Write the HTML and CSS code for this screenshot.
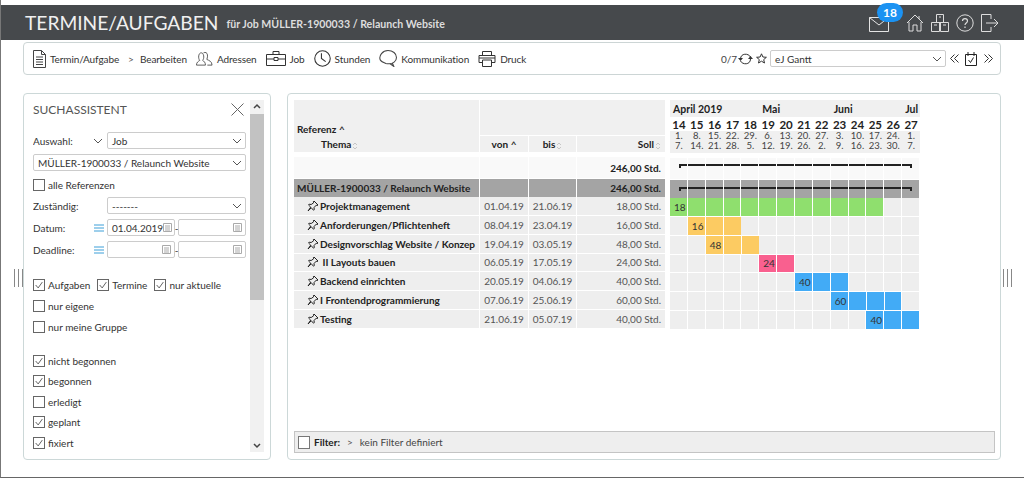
FILE: index.html
```html
<!DOCTYPE html>
<html lang="en">
<head>
    <meta charset="UTF-8">
    <title>Termine/Aufgaben</title>
    <link rel="stylesheet" href="styles.css">
</head>
<body>
<svg class="defs" width="0" height="0">
    <symbol id="pin" viewBox="0 0 12 12"><path d="M7 1l4 4-1 .6-.8-.4L7 7.600l.3 2-.8.6-2.200-2.400L1 11l2.700-3.900L1.500 5l.7-.8 2 .3L6.600 2.800l-.3-.9z" fill="none" stroke="#222" stroke-width="1"/></symbol>
    <symbol id="chev" viewBox="0 0 10 6"><path d="M1 1l4 4 4-4" fill="none" stroke="#555" stroke-width="1"/></symbol>
    <symbol id="check" viewBox="0 0 12 12"><path d="M2 6l3 3.500 5-7" fill="none" stroke="#444" stroke-width="1"/></symbol>
    <symbol id="cal" viewBox="0 0 9 9"><path d="M.5.500h8v8h-8zM2 3h5M2 5h5M2 7h5" fill="none" stroke="#aaa" stroke-width="1"/></symbol>
    <symbol id="lines" viewBox="0 0 10 8"><path d="M0 1h10M0 4h10M0 7h10" stroke="#3d9fd8" stroke-width="1"/></symbol>
    <symbol id="sort" viewBox="0 0 6 8"><path d="M1 3l2-2 2 2M1 5l2 2 2-2" fill="none" stroke="#bbb" stroke-width=".8"/></symbol>
</svg>

<div class="app">
    <header class="topbar">
        <h1>TERMINE/AUFGABEN</h1>
        <span class="subtitle">für Job MÜLLER-1900033 / Relaunch Website</span>
        <div class="top-icons">
            <div class="mail">
                <svg width="20" height="15" viewBox="0 0 20 15"><path d="M.5.500h19v14H.5zM.5.500L10 8l9.500-7.500" fill="none" stroke="#e4e4e4" stroke-width="1"/></svg>
                <span class="badge">18</span>
            </div>
            <svg width="18" height="18" viewBox="0 0 18 18"><path d="M1 9l8-8 8 8M3 8v9h4v-6h4v6h4V8M13 2v3" fill="none" stroke="#ddd" stroke-width="1"/></svg>
            <svg width="18" height="18" viewBox="0 0 18 18"><path d="M5.500.500h7v8h-7zM.5 8.500h8v9h-8zM9.500 8.500h8v9h-8zM3 11h3M12 11h3M8 3h2" fill="none" stroke="#ddd" stroke-width="1"/></svg>
            <svg width="18" height="18" viewBox="0 0 18 18"><circle cx="9" cy="9" r="8.200" fill="none" stroke="#ddd"/><path d="M6.500 7c0-3.200 5-3.200 5 0 0 2-2.500 2-2.500 4M9 12.500v1.500" fill="none" stroke="#ddd" stroke-width="1.200"/></svg>
            <svg width="18" height="18" viewBox="0 0 18 18"><path d="M10 5V.500H.5v17H10V13M5 9h12M13 5l4 4-4 4" fill="none" stroke="#ddd" stroke-width="1"/></svg>
        </div>
    </header>

    <nav class="toolbar">
        <a class="tool"><svg width="13" height="18" viewBox="0 0 13 18"><path d="M.5.500h8l4 4v13H.5zM8.500.500v4h4M3 7h7M3 9.500h7M3 12h7M3 14.500h7" fill="none" stroke="#444"/></svg>Termin/Aufgabe</a>
        <span class="crumb">&gt;</span>
        <a class="tool">Bearbeiten</a>
        <a class="tool"><svg width="17" height="15" viewBox="0 0 18 15"><path d="M.5 14.500c0-3 2-4 3.500-5-2-2-1.500-8 1.500-8s3.500 6 1.500 8c1.500 1 3 2 3 5zM8 1.500c3-1.500 5.500 1 3.500 7 2 1 5.500 2 5.500 6h-5" fill="none" stroke="#444" stroke-width=".9"/></svg>Adressen</a>
        <a class="tool"><svg width="20" height="15" viewBox="0 0 20 15"><path d="M.5 3.500h19v11H.5zM7 3.500V.5h6v3M.5 8H8M12 8h7.500M8 6.500h4v3H8z" fill="none" stroke="#333"/></svg>Job</a>
        <a class="tool"><svg width="17" height="17" viewBox="0 0 16 16"><circle cx="8" cy="8" r="7.300" fill="none" stroke="#333"/><path d="M7 3v5l4 3" fill="none" stroke="#333"/></svg>Stunden</a>
        <a class="tool"><svg width="18" height="17" viewBox="0 0 17 16"><path d="M8.500.500c4.500 0 8 2.700 8 6.500s-3.500 6-7 6c-1.500 0-2 0-3-.3C4.500 12 2 11 1.200 9.500-.5 5 3.500.500 8.500.500zM12.500 12l1.500 3.500-3.500-2.500" fill="none" stroke="#444"/></svg>Kommunikation</a>
        <a class="tool"><svg width="18" height="16" viewBox="0 0 17 16"><path d="M4 4V.5h9V4M.5 4.500h16v7H13M4 11.500H.5v-7M4 9h9v6.500H4zM.5 7h16" fill="none" stroke="#333"/></svg>Druck</a>
        <div class="tool-right">
            <span class="count">0/7</span>
            <svg width="15" height="12" viewBox="0 0 15 12"><path d="M2.500 6c0-6 8-6 10-2M12.500 6c0 6-8 6-10 2" fill="none" stroke="#333"/><path d="M0 5h5L2.500 8zM10 6h5l-2.500-3z" fill="#333"/></svg>
            <svg width="11" height="11" viewBox="0 0 11 11"><path d="M5.500.800l1.400 3.200 3.500.3-2.700 2.300.8 3.400-3-1.800-3 1.800.8-3.400L.6 4.300 4.100 4z" fill="none" stroke="#333"/></svg>
            <div class="select gantt-select"><span>eJ Gantt</span><svg class="chev"><use href="#chev"/></svg></div>
            <svg class="prev" width="9" height="9" viewBox="0 0 9 9"><path d="M4.500.5l-4 4 4 4M8.500.5l-4 4 4 4" fill="none" stroke="#333"/></svg>
            <svg class="today" width="12" height="14" viewBox="0 0 12 14"><path d="M.5 2.500h11v11H.5zM3 0v4M9 0v4M3.500 8l2 2.500 3-5" fill="none" stroke="#222"/></svg>
            <svg class="next" width="9" height="9" viewBox="0 0 9 9"><path d="M.5.500l4 4-4 4M4.500.500l4 4-4 4" fill="none" stroke="#333"/></svg>
        </div>
    </nav>

    <main class="content">
        <div class="handle"><i></i><i></i><i></i></div>

        <aside class="panel search">
            <div class="search-body">
                <div class="search-title">
                    <h2>SUCHASSISTENT</h2>
                    <svg width="13" height="13" viewBox="0 0 13 13"><path d="M.5.500l12 12M12.500.500l-12 12" stroke="#666" stroke-width="1"/></svg>
                </div>
                <div class="field">
                    <label>Auswahl:</label>
                    <svg class="chev side"><use href="#chev"/></svg>
                    <div class="select"><span>Job</span><svg class="chev"><use href="#chev"/></svg></div>
                </div>
                <div class="select full"><span>MÜLLER-1900033 / Relaunch Website</span><svg class="chev"><use href="#chev"/></svg></div>
                <label class="cb single"><i></i>alle Referenzen</label>
                <div class="field">
                    <label>Zuständig:</label>
                    <div class="select"><span>-------</span><svg class="chev"><use href="#chev"/></svg></div>
                </div>
                <div class="field date">
                    <label>Datum:</label>
                    <svg class="lines"><use href="#lines"/></svg>
                    <div class="range">
                        <div class="select"><span>01.04.2019</span><svg class="cal"><use href="#cal"/></svg></div>-
                        <div class="select"><span></span><svg class="cal"><use href="#cal"/></svg></div>
                    </div>
                </div>
                <div class="field date">
                    <label>Deadline:</label>
                    <svg class="lines"><use href="#lines"/></svg>
                    <div class="range">
                        <div class="select"><span></span><svg class="cal"><use href="#cal"/></svg></div>-
                        <div class="select"><span></span><svg class="cal"><use href="#cal"/></svg></div>
                    </div>
                </div>

                <div class="checks first">
                    <div class="cb-row">
                        <label class="cb"><i><svg><use href="#check"/></svg></i>Aufgaben</label>
                        <label class="cb"><i><svg><use href="#check"/></svg></i>Termine</label>
                        <label class="cb"><i><svg><use href="#check"/></svg></i>nur aktuelle</label>
                    </div>
                    <label class="cb"><i></i>nur eigene</label>
                    <label class="cb"><i></i>nur meine Gruppe</label>
                </div>
                <div class="checks">
                    <label class="cb"><i><svg><use href="#check"/></svg></i>nicht begonnen</label>
                    <label class="cb"><i><svg><use href="#check"/></svg></i>begonnen</label>
                    <label class="cb"><i></i>erledigt</label>
                    <label class="cb"><i><svg><use href="#check"/></svg></i>geplant</label>
                    <label class="cb"><i><svg><use href="#check"/></svg></i>fixiert</label>
                </div>
            </div>
            <div class="scrollbar">
                <svg width="14" height="14" viewBox="0 0 14 14"><path d="M4 8l3-3 3 3" fill="none" stroke="#444" stroke-width="1.500"/></svg>
                <div class="thumb"></div>
                <svg class="down" width="14" height="14" viewBox="0 0 14 14"><path d="M4 6l3 3 3-3" fill="none" stroke="#444" stroke-width="1.500"/></svg>
            </div>
        </aside>

        <section class="panel plan">
            <div class="plan-grid">
                <div class="tasks">
                    <div class="thead">
                        <div class="th-ref">
                            <div><b>Referenz</b> <em>^</em></div>
                            <div class="th-thema"><b>Thema</b><svg class="sort"><use href="#sort"/></svg></div>
                        </div>
                        <div class="th-blank"></div>
                        <div class="th-col"><b>von</b> <em>^</em></div>
                        <div class="th-col"><b>bis</b><svg class="sort"><use href="#sort"/></svg></div>
                        <div class="th-col num"><b>Soll</b><svg class="sort"><use href="#sort"/></svg></div>
                    </div>
                    <div class="trow total"><div></div><div></div><div></div><div class="num">246,00 Std.</div></div>
                    <div class="trow group"><div>MÜLLER-1900033 / Relaunch Website</div><div></div><div></div><div class="num">246,00 Std.</div></div>
                    <div class="tbody">
                        <div class="trow"><div class="name"><svg class="pin"><use href="#pin"/></svg>Projektmanagement</div><div>01.04.19</div><div>21.06.19</div><div class="num">18,00 Std.</div></div>
                        <div class="trow"><div class="name"><svg class="pin"><use href="#pin"/></svg>Anforderungen/Pflichtenheft</div><div>08.04.19</div><div>23.04.19</div><div class="num">16,00 Std.</div></div>
                        <div class="trow"><div class="name"><svg class="pin"><use href="#pin"/></svg>Designvorschlag Website / Konzep</div><div>19.04.19</div><div>03.05.19</div><div class="num">48,00 Std.</div></div>
                        <div class="trow"><div class="name"><svg class="pin"><use href="#pin"/></svg>&nbsp;II Layouts bauen</div><div>06.05.19</div><div>17.05.19</div><div class="num">24,00 Std.</div></div>
                        <div class="trow"><div class="name"><svg class="pin"><use href="#pin"/></svg>Backend einrichten</div><div>20.05.19</div><div>04.06.19</div><div class="num">40,00 Std.</div></div>
                        <div class="trow"><div class="name"><svg class="pin"><use href="#pin"/></svg>I Frontendprogrammierung</div><div>07.06.19</div><div>25.06.19</div><div class="num">60,00 Std.</div></div>
                        <div class="trow"><div class="name"><svg class="pin"><use href="#pin"/></svg>Testing</div><div>21.06.19</div><div>05.07.19</div><div class="num">40,00 Std.</div></div>
                    </div>
                </div>

                <div class="gantt">
                    <div class="months">
                        <span style="grid-column: span 5">April 2019</span>
                        <span style="grid-column: span 4">Mai</span>
                        <span style="grid-column: span 4">Juni</span>
                        <span>Jul</span>
                    </div>
                    <div class="weeks">
                        <span>14</span><span>15</span><span>16</span><span>17</span><span>18</span><span>19</span><span>20</span>
                        <span>21</span><span>22</span><span>23</span><span>24</span><span>25</span><span>26</span><span>27</span>
                    </div>
                    <div class="days">
                        <span>1.<br>7.</span><span>8.<br>14.</span><span>15.<br>21.</span><span>22.<br>28.</span><span>29.<br>5.</span>
                        <span>6.<br>12.</span><span>13.<br>19.</span><span>20.<br>26.</span><span>27.<br>2.</span><span>3.<br>9.</span>
                        <span>10.<br>16.</span><span>17.<br>23.</span><span>24.<br>30.</span><span>1.<br>7.</span>
                    </div>
                    <div class="g-total"><div class="sum-bar"></div></div>
                    <div class="g-group"><div class="sum-bar"></div></div>
                    <div class="g-body">
                        <div class="g-row"><span class="bar green" style="grid-column: 1 / span 12">18</span></div>
                        <div class="g-row"><span class="bar yellow" style="grid-column: 2 / span 3">16</span></div>
                        <div class="g-row"><span class="bar yellow" style="grid-column: 3 / span 3">48</span></div>
                        <div class="g-row"><span class="bar pink" style="grid-column: 6 / span 2">24</span></div>
                        <div class="g-row"><span class="bar blue" style="grid-column: 8 / span 3">40</span></div>
                        <div class="g-row"><span class="bar blue" style="grid-column: 10 / span 4">60</span></div>
                        <div class="g-row"><span class="bar blue" style="grid-column: 12 / span 3">40</span></div>
                    </div>
                </div>
            </div>

            <div class="filter">
                <i class="filter-box"></i>
                <b>Filter:</b>
                <span class="crumb">&gt;</span>
                <span>kein Filter definiert</span>
            </div>
        </section>

        <div class="handle"><i></i><i></i><i></i></div>
    </main>
</div>
</body>
</html>
```

FILE: styles.css
```css
* {
    box-sizing: border-box;
}
html, body {
    margin: 0;
    height: 100%;
    overflow: hidden;
}
body {
    font-family: Lato, "Open Sans", sans-serif;
    font-size: 10px;
    color: #333;
    background: #fff;
}
.defs {
    position: absolute;
}
.app {
    height: 479px;
    padding-top: 5px;
    border-top: 1px solid #ddd;
    border-left: 1px solid #777;
    border-bottom: 1px solid #666;
    margin-top: -1px;
    display: flex;
    flex-direction: column;
}

/* top bar */
.topbar {
    height: 35px;
    flex: none;
    background: #46494c;
    display: flex;
    align-items: center;
    padding: 0 25px 0 24px;
    color: #e8e8e8;
}
.topbar h1 {
    margin: 0;
    font-size: 19.200px;
    font-weight: 400;
    color: #f0f0f0;
}
.subtitle {
    margin-left: 8px;
    margin-top: 3px;
    font-size: 10.600px;
    font-weight: 700;
    color: #ddd;
}
.top-icons {
    margin-left: auto;
    display: flex;
    align-items: center;
    gap: 7px;
}
.mail {
    position: relative;
    width: 30px;
    height: 15px;
    margin-top: 3px;
}
.mail svg {
    display: block;
}
.badge {
    position: absolute;
    left: 8px;
    top: -14px;
    width: 26px;
    height: 19px;
    border-radius: 10px;
    background: #1b92f2;
    color: #fff;
    font-size: 12px;
    font-weight: 700;
    text-align: center;
    line-height: 19px;
}

/* toolbar */
.toolbar {
    height: 33px;
    margin: 2px 23px 0 22px;
    flex: none;
    border: 1px solid #ccd5d5;
    border-radius: 4px;
    display: flex;
    align-items: center;
    padding: 0 7px 0 9px;
    color: #333;
}
.tool {
    display: flex;
    align-items: center;
    gap: 4px;
    margin-right: 9px;
    letter-spacing: -.1px;
}
.crumb {
    margin-right: 6px;
    color: #555;
    font-size: 10px;
}
.tool-right {
    margin-left: auto;
    display: flex;
    align-items: center;
    gap: 3px;
}
.count {
    color: #444;
    margin-right: -2px;
}
.select {
    height: 17px;
    border: 1px solid #ccc;
    border-radius: 2px;
    background: #fff;
    display: flex;
    align-items: center;
    justify-content: space-between;
    padding: 0 3px 0 4px;
    white-space: nowrap;
    color: #333;
}
.gantt-select {
    width: 176px;
}
.prev {
    margin-left: 1px;
}
.today {
    margin: 0 4px 0 3px;
}
.chev {
    width: 10px;
    height: 6px;
    flex: none;
}

/* panels */
.content {
    flex: 1;
    min-height: 0;
    display: flex;
    align-items: center;
    padding-top: 18px;
    padding-bottom: 17px;
}
.handle {
    width: 22px;
    flex: none;
    display: flex;
    justify-content: flex-end;
    gap: 3px;
    margin-top: 2px;
}
.handle i {
    width: 1px;
    height: 18px;
    background: #888;
}
.handle:last-child {
    justify-content: flex-start;
    padding-left: 2px;
    margin-right: auto;
}
.panel {
    height: 367px;
    border: 1px solid #ccd8d8;
    border-radius: 4px;
    background: #fff;
}

/* search panel */
.search {
    width: 248px;
    margin-right: 16px;
    display: flex;
    padding: 6px 6px 7px 9px;
}
.search-body {
    flex: 1;
    min-width: 0;
    padding-right: 4px;
    overflow: hidden;
}
.search-title {
    display: flex;
    justify-content: space-between;
    align-items: center;
    height: 18px;
    margin-bottom: 14px;
    padding-right: 2px;
}
.search-title h2 {
    margin: 0;
    font-size: 12px;
    font-weight: 400;
    color: #555;
}
.field {
    display: flex;
    align-items: center;
    height: 17px;
    margin-bottom: 5px;
    position: relative;
}
.field label {
    width: 74px;
    flex: none;
}
.field .select {
    flex: 1;
}
.chev.side {
    position: absolute;
    left: 60px;
    top: 6px;
}
.lines {
    position: absolute;
    left: 61px;
    top: 5px;
    width: 10px;
    height: 8px;
}
.select.full {
    margin-bottom: 7px;
}
.range {
    flex: 1;
    min-width: 0;
    display: flex;
    align-items: center;
}
.range .select {
    flex: 1 1 0;
    min-width: 0;
}
.cal {
    width: 9px;
    height: 9px;
    flex: none;
}
.cb {
    display: flex;
    align-items: center;
    gap: 3px;
    height: 13px;
    white-space: nowrap;
}
.cb i {
    width: 12px;
    height: 12px;
    border: 1px solid #666;
    background: #fff;
    flex: none;
}
.cb i svg {
    width: 10px;
    height: 10px;
    display: block;
}
.cb.single {
    margin-bottom: 6px;
}
.checks {
    display: flex;
    flex-direction: column;
    gap: 7.600px;
}
.checks.first {
    gap: 8px;
    margin-top: 20px;
    margin-bottom: 21px;
}
.cb-row {
    display: flex;
    gap: 7px;
}
.scrollbar {
    width: 14px;
    flex: none;
    background: #f1f1f1;
    display: flex;
    flex-direction: column;
}
.scrollbar svg {
    display: block;
    flex: none;
}
.thumb {
    height: 186px;
    background: #c2c2c2;
}
.scrollbar .down {
    margin-top: auto;
}

/* plan panel */
.plan {
    width: 714px;
    padding: 6px 5px 6px 6px;
    display: flex;
    flex-direction: column;
    justify-content: space-between;
}
.plan-grid {
    display: flex;
    gap: 5px;
}
.tasks {
    width: 371px;
    flex: none;
}
.thead {
    display: grid;
    grid-template-columns: 185px 48px 47px 88px;
    grid-template-rows: 35px 16px;
    gap: 1px;
    background: #fff;
    height: 52px;
    margin-bottom: 5px;
}
.thead b {
    color: #222;
}
.thead em {
    font-style: normal;
    font-weight: 700;
}
.th-ref {
    grid-row: 1 / span 2;
    background: #f0f0f0;
    padding: 23px 3px 0;
}
.th-thema {
    margin-top: 3px;
    padding-left: 24px;
}
.th-blank {
    grid-column: 2 / span 3;
    background: #f0f0f0;
}
.th-col {
    background: #f0f0f0;
    text-align: center;
    line-height: 16px;
}
.th-col.num {
    text-align: right;
    padding-right: 4px;
}
.sort {
    width: 6px;
    height: 8px;
    margin-left: 1px;
    vertical-align: -2px;
}
.trow {
    display: grid;
    grid-template-columns: 185px 48px 47px 88px;
    gap: 1px;
    align-items: stretch;
    min-height: 0;
}
.trow > div {
    background: #eee;
    display: flex;
    align-items: center;
    justify-content: center;
    color: #555;
    white-space: nowrap;
    overflow: hidden;
}
.trow > .num {
    justify-content: flex-end;
    padding-right: 4px;
}
.trow > .name {
    justify-content: flex-start;
    padding-left: 13px;
    font-weight: 700;
    color: #222;
}
.pin {
    width: 12px;
    height: 12px;
    margin-right: 1px;
    flex: none;
}
.total {
    height: 21px;
    margin-bottom: 1px;
}
.total > div {
    background: #f9f9f9;
    font-weight: 700;
    color: #222;
}
.group {
    height: 18px;
}
.trow.group > div {
    background: #a4a4a4;
    font-weight: 700;
    color: #222;
}
.trow.group > div:first-child {
    justify-content: flex-start;
    padding-left: 3px;
}
.trow.total > .num {
    color: #222;
}
.tbody {
    height: 131px;
    display: grid;
    grid-auto-rows: 1fr;
    gap: 1px;
}

/* gantt */
.gantt {
    width: 250px;
    flex: none;
}
.months, .weeks, .days, .g-row {
    display: grid;
    grid-template-columns: repeat(14, 1fr);
}
.months {
    height: 17px;
    background: #f0f0f0;
    font-weight: 700;
    line-height: 19px;
    color: #222;
    font-size: 10.500px;
}
.months span {
    padding-left: 3px;
    white-space: nowrap;
}
.weeks {
    height: 14px;
    font-weight: 700;
    font-size: 11.500px;
    line-height: 16px;
    text-align: center;
    color: #222;
}
.days {
    height: 22px;
    background: #f0f0f0;
    font-size: 9.500px;
    line-height: 10px;
    text-align: center;
    margin-bottom: 5px;
    color: #444;
}
.g-total, .g-group {
    padding: 0 8px 0 9px;
    display: flex;
    align-items: center;
    background-image: repeating-linear-gradient(90deg, transparent 0 16.857px, #fff 16.857px 17.857px);
}
.g-total {
    height: 21px;
    margin-bottom: 1px;
    background-color: #f9f9f9;
    padding-bottom: 7px;
}
.g-group {
    height: 18px;
    background-color: #a4a4a4;
    padding-bottom: 2px;
}
.sum-bar {
    flex: 1;
    height: 2px;
    position: relative;
    background-image: repeating-linear-gradient(90deg, #222 0 7.857px, transparent 7.857px 8.857px, #222 8.857px 17.857px);
}
.sum-bar::before, .sum-bar::after {
    content: "";
    position: absolute;
    top: 0;
    width: 2px;
    height: 4px;
    background: #222;
}
.sum-bar::before {
    left: 0;
}
.sum-bar::after {
    right: 0;
}
.g-body {
    height: 131px;
    display: grid;
    grid-auto-rows: 1fr;
    gap: 1px;
}
.g-row {
    background-color: #eee;
    background-image: repeating-linear-gradient(90deg, transparent 0 16.857px, #fff 16.857px 17.857px);
}
.bar {
    font-size: 10px;
    color: #333;
    display: flex;
    align-items: center;
    padding-left: 4px;
    background-image: repeating-linear-gradient(90deg, transparent 0 16.857px, #fff 16.857px 17.857px);
}
.green {
    background-color: #8fdf6e;
}
.yellow {
    background-color: #fccb62;
}
.pink {
    background-color: #f9608f;
}
.blue {
    background-color: #42abf6;
}

/* filter */
.filter {
    height: 22px;
    background: #eee;
    border: 1px solid #c4c4c4;
    display: flex;
    align-items: center;
    padding-left: 3px;
    gap: 4px;
    color: #444;
}
.filter b {
    color: #222;
}
.filter .crumb {
    margin: 0 3px;
}
.filter-box {
    width: 12px;
    height: 13px;
    background: #fff;
    border: 1px solid #777;
}
```
